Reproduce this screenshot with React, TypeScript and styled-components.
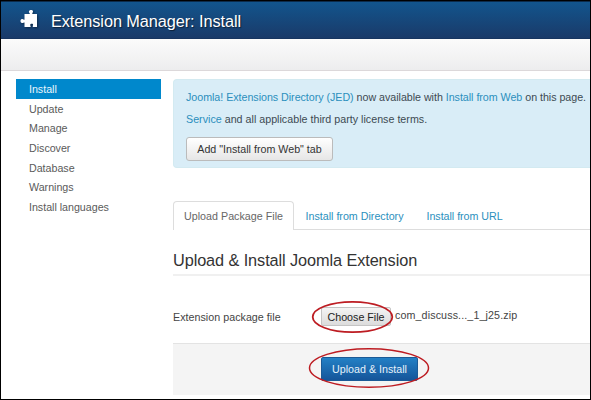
import React from "react";
import styled, { createGlobalStyle, css } from "styled-components";

const GlobalStyle = createGlobalStyle`
  * { box-sizing: border-box; }
  body { margin: 0; background: #fff; }
  button { font: inherit; letter-spacing: inherit; padding: 0; margin: 0; }
`;

const Page = styled.div`
  width: 591px;
  height: 400px;
  overflow: hidden;
  border: 1px solid #000;
  background: #fff;
  color: #444;
  font-family: "Liberation Sans", Arial, sans-serif;
  font-size: 10.7px;
  letter-spacing: 0;
  white-space: nowrap;
`;

const Header = styled.header`
  display: flex;
  align-items: center;
  height: 38px;
  padding-left: 19px;
  border-top: 1px solid #0c2b4a;
  border-bottom: 1px solid #173560;
  background: linear-gradient(#12558d, #1a3a69);
`;

const PuzzleIcon = styled.svg`
  width: 18px;
  height: 18px;
  margin-top: -2px;
  fill: #fff;
  filter: drop-shadow(1px 1px 1px rgba(0, 0, 0, 0.4));
`;

const PageTitle = styled.h1`
  margin: 0 0 0 12px;
  color: #fff;
  font-size: 16.3px;
  font-weight: 400;
  line-height: 36px;
  letter-spacing: -0.07px;
  padding: 1px 0 0 1px;
  text-shadow: 1px 1px 1px rgba(0, 0, 0, 0.5);
`;

const Toolbar = styled.div`
  height: 32px;
  border-bottom: 1px solid #dcd8da;
  background: linear-gradient(#fbfbfb, #ededee);
`;

const Body = styled.div`
  display: grid;
  grid-template-columns: 145px 417px;
  column-gap: 12px;
  padding: 8px 0 0 15px;
`;

const Sidebar = styled.nav`
  display: flex;
  flex-direction: column;
  letter-spacing: -0.02px;
`;

const NavItem = styled.a<{ $active?: boolean }>`
  height: 19.7px;
  padding-left: 13px;
  line-height: 20px;
  color: #5a5a5a;
  ${(p) =>
    p.$active &&
    css`
      color: #e8f6fd;
      background: #0088cc;
    `}
`;

const Main = styled.main`
  display: flex;
  flex-direction: column;
`;

const Notice = styled.section`
  height: 89px;
  padding: 7px 0 0 12px;
  border: 1px solid #d3eaf1;
  border-right: 0;
  border-radius: 4px 0 0 4px;
  background: #d9edf7;
  color: #3d4a52;
`;

const NoticeLine = styled.p<{ $spacing: number }>`
  margin: 0;
  line-height: 21.5px;
  letter-spacing: ${(p) => p.$spacing}px;
`;

const Link = styled.a`
  color: #2b8fbd;
`;

const TabButton = styled.button`
  display: block;
  width: 147px;
  height: 24px;
  margin-top: 7px;
  border: 1px solid #bbb;
  border-radius: 3px;
  background: linear-gradient(#fff, #e6e6e6);
  color: #333;
`;

const Tabs = styled.div`
  display: flex;
  height: 29px;
  margin-top: 33px;
  border-bottom: 1px solid #ddd;
`;

const Tab = styled.a<{ $active?: boolean; $width: number; $spacing: number }>`
  width: ${(p) => p.$width}px;
  height: 29px;
  padding-left: 11.5px;
  line-height: 30px;
  letter-spacing: ${(p) => p.$spacing}px;
  color: #2b8fbd;
  ${(p) =>
    p.$active &&
    css`
      padding-left: 10px;
      line-height: 28px;
      color: #666;
      background: #fff;
      border: 1px solid #ddd;
      border-bottom: 0;
      border-radius: 4px 4px 0 0;
    `}
`;

const SectionTitle = styled.h2`
  height: 46px;
  margin: 0;
  border-bottom: 2px solid #f0f0f0;
  color: #333;
  font-size: 16.3px;
  font-weight: 400;
  line-height: 61px;
  letter-spacing: -0.09px;
`;

const Field = styled.div`
  display: grid;
  grid-template-columns: 148px 74px 1fr;
  align-items: center;
  height: 67px;
  padding-top: 14px;
`;

const FieldLabel = styled.label`
  letter-spacing: 0.03px;
`;

const Filename = styled.span`
  margin-top: -3px;
  letter-spacing: 0.12px;
`;

const Marked = styled.div`
  position: relative;
  width: max-content;
`;

const Ring = styled.svg<{ $x: number; $y: number; $w: number; $h: number; $weight: number }>`
  position: absolute;
  left: ${(p) => p.$x}px;
  top: ${(p) => p.$y}px;
  width: ${(p) => p.$w}px;
  height: ${(p) => p.$h}px;
  overflow: visible;
  fill: none;
  stroke: #bd1c22;
  stroke-width: ${(p) => p.$weight};
  pointer-events: none;
`;

const FileButton = styled.button`
  display: block;
  width: 70px;
  height: 19px;
  border: 1px solid #c4c4c4;
  border-radius: 2px;
  background: linear-gradient(#f4f4f4, #dcdcdc);
  color: #222;
`;

const Actions = styled.div`
  height: 52px;
  padding: 13px 0 0 148px;
  border-top: 1px solid #e3e3e3;
  background: #f4f4f4;
`;

const PrimaryButton = styled.button`
  display: block;
  width: 97px;
  height: 24px;
  border: 1px solid #1b5a96;
  border-radius: 2px;
  background: linear-gradient(#2380c5, #15559a);
  color: #e6f2fb;
`;

const sections = ["Install", "Update", "Manage", "Discover", "Database", "Warnings", "Install languages"];

export default function App() {
  return (
    <Page>
      <GlobalStyle />
      <Header>
        <PuzzleIcon viewBox="0 0 18 18">
          <path d="M4.500 4H9.700V3C8.900 2.500 8.800 1.800 9 1.200C9.300.3 10.200 0 11 0C12 0 12.900.5 13 1.300C13.100 2 12.900 2.600 12.300 3V4H17V17H12.800V15.800C13.300 15 13.200 14.200 12.400 13.800C11.300 13.400 10.200 14 10.200 14.900C10.200 15.300 10.300 15.600 10.600 15.900V17H4.500V12.400H3.800C3.200 13 2.600 13.200 1.900 13C1 12.800.5 12 .5 11C.5 10 1 9.200 1.900 9C2.700 8.800 3.300 9.100 3.800 9.700H4.500Z" />
        </PuzzleIcon>
        <PageTitle>Extension Manager: Install</PageTitle>
      </Header>
      <Toolbar />
      <Body>
        <Sidebar>
          {sections.map((name, i) => (
            <NavItem key={name} $active={i === 0}>
              {name}
            </NavItem>
          ))}
        </Sidebar>
        <Main>
          <Notice>
            <NoticeLine $spacing={-0.03}>
              <Link>Joomla! Extensions Directory (JED)</Link> now available with <Link>Install from Web</Link> on this page.
            </NoticeLine>
            <NoticeLine $spacing={0.01}>
              <Link>Service</Link> and all applicable third party license terms.
            </NoticeLine>
            <TabButton>Add "Install from Web" tab</TabButton>
          </Notice>
          <Tabs>
            <Tab $active $width={121} $spacing={0.02}>Upload Package File</Tab>
            <Tab $width={121} $spacing={0}>Install from Directory</Tab>
            <Tab $width={100} $spacing={-0.03}>Install from URL</Tab>
          </Tabs>
          <SectionTitle>Upload &amp; Install Joomla Extension</SectionTitle>
          <Field>
            <FieldLabel>Extension package file</FieldLabel>
            <Marked>
              <FileButton>Choose File</FileButton>
              <Ring $x={-9} $y={-6} $w={81} $h={32} $weight={1.8}>
                <ellipse cx="40.500" cy="16" rx="39.800" ry="15.200" />
              </Ring>
            </Marked>
            <Filename>com_discuss..._1_j25.zip</Filename>
          </Field>
          <Actions>
            <Marked>
              <PrimaryButton>Upload &amp; Install</PrimaryButton>
              <Ring $x={-12} $y={-9} $w={120} $h={40} $weight={1.5}>
                <ellipse cx="60" cy="20" rx="59.500" ry="19.300" />
              </Ring>
            </Marked>
          </Actions>
        </Main>
      </Body>
    </Page>
  );
}
